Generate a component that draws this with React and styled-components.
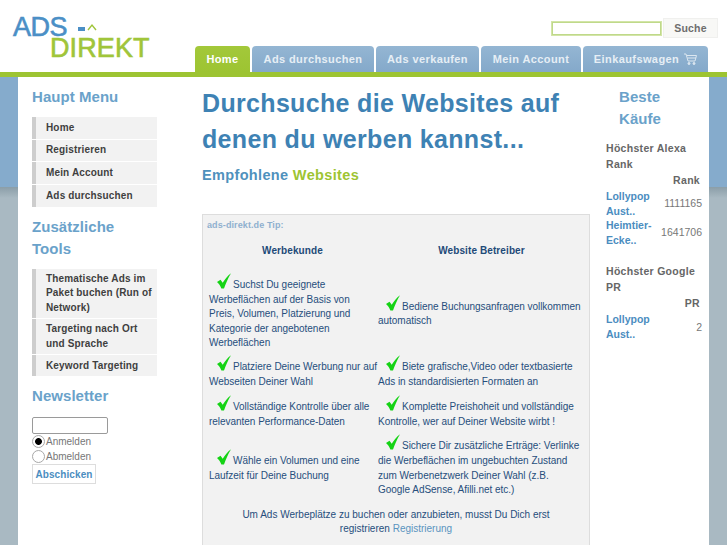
import React from "react";
import styled, { createGlobalStyle } from "styled-components";

const Global = createGlobalStyle`
  html, body { margin: 0; padding: 0; height: 545px; overflow: hidden; background: #fff; }
  body { font-family: "Liberation Sans", Arial, sans-serif; }
  * { box-sizing: border-box; }
`;
const Page = styled.div`
  width: 727px; height: 545px; overflow: hidden; display: flex; flex-direction: column;
  background: linear-gradient(#85abcc 0, #85abcc 187px, #8b9ea8 187px, #a9b9c2 198px, #a9b9c2 100%);
`;
const Header = styled.header`
  height: 77px; flex: none; background: #fff; border-bottom: 5px solid #9dc432;
  display: flex; justify-content: space-between; align-items: flex-end; padding: 0 19px 0 12px;
  position: relative;
`;
const Logo = styled.div`
  position: absolute; left: 12px; top: 13px; width: 140px; height: 46px;
`;
const LogoAds = styled.span`
  position: absolute; left: 1px; top: 4px; font: 400 27px/20px "Liberation Sans", sans-serif; color: #4b8fc6; letter-spacing: -0.5px;
  -webkit-text-stroke: .6px #4b8fc6;
`;
const LogoDash = styled.span`
  position: absolute; left: 66px; top: 14px; width: 7px; height: 4px; background: #4b8fc6;
`;
const LogoDirekt = styled.span`
  position: absolute; left: 38px; top: 24.5px; font: 400 27px/20px "Liberation Sans", sans-serif; color: #a0c53a; letter-spacing: .1px;
  -webkit-text-stroke: .6px #a0c53a;
`;
const LogoArc = styled.svg`
  position: absolute; left: 75px; top: 10px; width: 10px; height: 9px;
`;
const Tabs = styled.nav`
  display: flex; margin-left: 183px; gap: 2px;
`;
const Tab = styled.a`
  height: 26px; width: ${p => p.$w}px; display: flex; align-items: center; justify-content: center; gap: 5px;
  border-radius: 4px 4px 0 0; font-size: 11px; font-weight: 700; color: ${p => p.$active ? "#fff" : "#e6eef5"};
  letter-spacing: .4px;
  background: ${p => p.$active ? "linear-gradient(#a3c83a, #9dc432)" : "linear-gradient(#94b6d3, #84a9ca)"};
`;
const Search = styled.form`
  position: absolute; right: 9px; top: 18px; display: flex; align-items: center; gap: 2px;
`;
const SearchInput = styled.input`
  width: 109px; height: 13px; border: 1px solid #bfd98a; outline: 1px solid #d3e5a8; background: #fff; padding: 0; margin: 0;
`;
const SearchBtn = styled.button`
  width: 55px; height: 20px; border: 1px solid #f0f0ee; background: #f8f8f6; font: 700 10.5px "Liberation Sans", sans-serif;
  color: #6d6d6d; letter-spacing: .2px; padding: 0;
`;
const Body = styled.main`
  flex: 1; margin: 0 18px; background: #fff; display: grid; grid-template-columns: 170px 418px 103px; overflow: hidden;
  min-height: 0;
`;
const Left = styled.aside` padding: 9px 0 0 14px; width: 139px; `;
const Side = styled.h3`
  margin: 0; font-size: 15px; line-height: 22px; font-weight: 700; color: #6aa2ca; letter-spacing: .05px;
`;
const Menu = styled.ul`
  list-style: none; margin: 9px 0 9px; padding: 0; display: flex; flex-direction: column; gap: 1px; width: 125px;
`;
const MenuItem = styled.li`
  display: flex; align-items: center;
  background: #f2f2f2; border-left: 4px solid #cdcdcd; padding: 3px 0 2.5px 10px; min-height: 21.7px;
  font-size: 10px; line-height: 14.6px; font-weight: 700; color: #3f3f3f; letter-spacing: .15px;
`;
const NewsInput = styled.input`
  display: block; width: 76px; height: 17px; margin: 10px 0 0; border: 1px solid #9a9a9a; border-radius: 2px; background: #fff; padding: 0;
`;
const RadioRow = styled.label`
  display: flex; align-items: center; gap: 1px; height: 15px; font-size: 10px; color: #777;
`;
const Radio = styled.input`
  appearance: none; width: 13px; height: 13px; margin: 0; border: 1px solid #a8a8a8; border-radius: 50%; background: #fff;
  &:checked { background: radial-gradient(circle, #000 0, #000 3px, #fff 3.8px); }
`;
const Submit = styled.button`
  display: block; margin-top: 0; width: 64px; height: 20px; border: 1px solid #ddd; outline: 0; background: #fff; padding: 0;
  font: 700 10px "Liberation Sans", sans-serif; color: #4b8dbf; letter-spacing: .1px;
`;
const Center = styled.section` padding: 8px 0 0 14px; `;
const Title = styled.h1`
  margin: 0; font-size: 25px; line-height: 36px; font-weight: 700; color: #3e82b4; letter-spacing: .33px;
`;
const Sub = styled.h2`
  margin: 7px 0 0; font-size: 14.5px; line-height: 22px; font-weight: 700; color: #4f91bd; letter-spacing: .35px;
  span { color: #9dc432; }
`;
const Tip = styled.div`
  margin-top: 28px; width: 388px; height: 340px; background: #f2f2f2; border: 1px solid #ddd; padding: 5px 4px;
`;
const TipLabel = styled.div`
  font-size: 9px; line-height: 11px; font-weight: 700; color: #8fb0cf; letter-spacing: .1px;
`;
const Table = styled.table`
  border-collapse: separate; border-spacing: 0; width: 378px; margin-top: 8px; table-layout: fixed; color: #264e7c;
  font-size: 10px; line-height: 14.6px; letter-spacing: -.03px;
`;
const Th = styled.th`
  font-size: 10px; font-weight: 700; color: #1e4a78; height: 31px; padding: 0 0 6px; letter-spacing: .1px; width: ${p => p.$w}px;
`;
const Td = styled.td`
  vertical-align: middle; padding: 3px ${p => p.$right ? "3px" : "0"} ${p => p.$pb}px ${p => p.$right ? "0" : "2px"};
`;
const Foot = styled.p`
  margin: 7px 0 0; text-align: center; color: #264e7c; font-size: 10px; line-height: 14.6px;
  a { color: #5a94bf; }
`;
const Right = styled.aside` padding: 9px 6px 0 0; `;
const RightHead = styled.h3`
  margin: 0 0 0 13px; width: 60px; font-size: 15px; line-height: 22px; font-weight: 700; color: #6aa2ca; letter-spacing: .05px;
`;
const RankTitle = styled.h4`
  margin: ${p => p.$top} 0 0; font-size: 10.5px; line-height: 15.5px; font-weight: 700; color: #666; letter-spacing: .3px;
`;
const RankHead = styled.div`
  text-align: right; margin-bottom: 1px; font-size: 10.5px; line-height: 16px; font-weight: 700; color: #666; letter-spacing: .3px; padding-right: 3px;
`;
const RankRow = styled.div`
  display: grid; grid-template-columns: 1fr 50px; align-items: center; padding-right: 1px;
  font-size: 10.5px; line-height: 14.6px;
`;
const RankLink = styled.a` font-weight: 700; color: #4b8dbf; `;
const RankVal = styled.span` text-align: right; color: #777; `;

const Tick = styled.svg` width: 14px; height: 16px; vertical-align: -1px; margin: 0 2px 0 8px; `;
const Check = () => (
  <Tick viewBox="0 0 16 18"><path d="M0 10 L4 7.5 L6.5 11 C9 7 12 3 16 0 C12.5 6 10 11.5 8 17.5 L5 17.5 C4 14.5 2.5 12 0 10Z" fill="#14d314" /></Tick>
);

const rows = [
  { pb: 1, a: "Suchst Du geeignete Werbeflächen auf der Basis von Preis,\u00a0Volumen, Platzierung und Kategorie der angebotenen Werbeflächen", b: "Bediene Buchungsanfragen vollkommen automatisch" },
  { pb: 3, a: "Platziere Deine Werbung nur auf Webseiten Deiner Wahl", b: "Biete grafische,Video oder textbasierte Ads in standardisierten Formaten an" },
  { pb: 2, a: "Vollständige Kontrolle über alle relevanten Performance-Daten", b: "Komplette Preishoheit und vollständige Kontrolle, wer auf Deiner Website wirbt !" },
  { pb: 3, a: "Wähle ein Volumen und eine Laufzeit für Deine Buchung", b: "Sichere Dir zusätzliche Erträge: Verlinke die Werbeflächen im ungebuchten Zustand zum Werbenetzwerk Deiner Wahl (z.B. Google AdSense, Afilli.net etc.)" },
];

export default function App() {
  return (
    <Page>
      <Global />
      <Header>
        <Logo>
          <LogoAds>ADS</LogoAds>
          <LogoDash />
          <LogoArc viewBox="0 0 10 9"><path d="M1 7 L5 2 L9 7" fill="none" stroke="#a0c53a" strokeWidth="1.4" /></LogoArc>
          <LogoDirekt>DIREKT</LogoDirekt>
        </Logo>
        <Search>
          <SearchInput />
          <SearchBtn type="button">Suche</SearchBtn>
        </Search>
        <Tabs>
          <Tab $active $w={55}>Home</Tab>
          <Tab $w={122}>Ads durchsuchen</Tab>
          <Tab $w={103}>Ads verkaufen</Tab>
          <Tab $w={100}>Mein Account</Tab>
          <Tab $w={125}>Einkaufswagen
            <svg width="13" height="12" viewBox="0 0 13 12" fill="none" stroke="#dce7f0" strokeWidth="1"><path d="M0 1h2l2 7h7l1.5-5.5H3" /><path d="M3.5 5h8.5" /><circle cx="5" cy="10.5" r="1" fill="#dce7f0" /><circle cx="10" cy="10.5" r="1" fill="#dce7f0" /></svg>
          </Tab>
        </Tabs>
      </Header>
      <Body>
        <Left>
          <Side>Haupt Menu</Side>
          <Menu>
            <MenuItem>Home</MenuItem>
            <MenuItem>Registrieren</MenuItem>
            <MenuItem>Mein Account</MenuItem>
            <MenuItem>Ads durchsuchen</MenuItem>
          </Menu>
          <Side>Zusätzliche Tools</Side>
          <Menu>
            <MenuItem>Thematische Ads im Paket buchen (Run of Network)</MenuItem>
            <MenuItem>Targeting nach Ort und Sprache</MenuItem>
            <MenuItem>Keyword Targeting</MenuItem>
          </Menu>
          <Side>Newsletter</Side>
          <NewsInput />
          <RadioRow><Radio type="radio" name="n" defaultChecked />Anmelden</RadioRow>
          <RadioRow><Radio type="radio" name="n" />Abmelden</RadioRow>
          <Submit type="button">Abschicken</Submit>
        </Left>
        <Center>
          <Title>Durchsuche die Websites auf denen du werben kannst...</Title>
          <Sub>Empfohlene <span>Websites</span></Sub>
          <Tip>
            <TipLabel>ads-direkt.de Tip:</TipLabel>
            <Table>
              <thead><tr><Th $w={171}>Werbekunde</Th><Th $w={207}>Website Betreiber</Th></tr></thead>
              <tbody>
                {rows.map(r => (
                  <tr key={r.a}>
                    <Td $pb={r.pb}><Check />{r.a}</Td>
                    <Td $right $pb={r.pb}><Check />{r.b}</Td>
                  </tr>
                ))}
              </tbody>
            </Table>
            <Foot>Um Ads Werbeplätze zu buchen oder anzubieten, musst Du Dich erst<br />registrieren <a>Registrierung</a></Foot>
          </Tip>
        </Center>
        <Right>
          <RightHead>Beste Käufe</RightHead>
          <RankTitle $top="11px">Höchster Alexa Rank</RankTitle>
          <RankHead>Rank</RankHead>
          <RankRow><RankLink>Lollypop Aust..</RankLink><RankVal>1111165</RankVal></RankRow>
          <RankRow><RankLink>Heimtier-Ecke..</RankLink><RankVal>1641706</RankVal></RankRow>
          <RankTitle $top="17px">Höchster Google PR</RankTitle>
          <RankHead>PR</RankHead>
          <RankRow><RankLink>Lollypop Aust..</RankLink><RankVal>2</RankVal></RankRow>
        </Right>
      </Body>
    </Page>
  );
}
